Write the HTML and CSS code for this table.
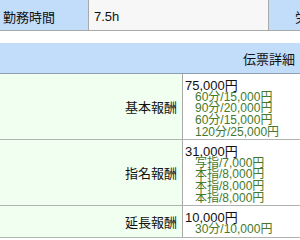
FILE: index.html
```html
<!DOCTYPE html>
<html lang="ja">
<head>
<meta charset="utf-8">
<link rel="stylesheet" href="styles.css">
</head>
<body>
<div class="top">
  <div class="tcell tlabel">勤務時間</div>
  <div class="tcell tvalue">7.5h</div>
  <div class="tcell tlabel tlabel-right">労働</div>
</div>
<div class="detail">
  <div class="head">伝票詳細</div>
  <div class="row">
    <div class="name">基本報酬</div>
    <div class="amt">
      <div class="main">75,000円</div>
      <div class="sub">60分/15,000円</div>
      <div class="sub">90分/20,000円</div>
      <div class="sub">60分/15,000円</div>
      <div class="sub">120分/25,000円</div>
    </div>
  </div>
  <div class="row">
    <div class="name">指名報酬</div>
    <div class="amt">
      <div class="main">31,000円</div>
      <div class="sub">写指/7,000円</div>
      <div class="sub">本指/8,000円</div>
      <div class="sub">本指/8,000円</div>
      <div class="sub">本指/8,000円</div>
    </div>
  </div>
  <div class="row">
    <div class="name">延長報酬</div>
    <div class="amt">
      <div class="main">10,000円</div>
      <div class="sub">30分/10,000円</div>
    </div>
  </div>
</div>
</body>
</html>
```

FILE: styles.css
```css
html, body {
  margin: 0;
  padding: 0;
  background: #ffffff;
  overflow: hidden;
}
body {
  width: 300px;
  font-family: "Liberation Sans", "Noto Sans CJK JP", sans-serif;
  font-size: 13px;
  color: #111111;
}
.top {
  display: grid;
  grid-template-columns: 89px 180px 80px;
  width: 349px;
  height: 30px;
  border-bottom: 1px solid #a9a9a9;
}
.tcell {
  display: flex;
  align-items: center;
  padding-top: 3px;
  white-space: nowrap;
  overflow: hidden;
}
.tlabel {
  background: #c1ddfa;
  padding-left: 3px;
  border-right: 1px solid #a9a9a9;
}
.tlabel-right {
  padding-left: 26px;
  border-right: none;
}
.tvalue {
  background: #f7f7f7;
  padding-left: 5px;
  border-right: 1px solid #a9a9a9;
}
.detail {
  margin-top: 12px;
}
.head {
  background: #c1ddfa;
  border-bottom: 1px solid #8e9fb1;
  display: flex;
  align-items: center;
  justify-content: flex-end;
  padding-right: 5px;
  padding-top: 1px;
  box-sizing: border-box;
  height: 31px;
}
.row {
  display: grid;
  grid-template-columns: 183px 1fr;
  border-bottom: 1px solid #b0b4b0;
}
.name {
  background: #f1fff1;
  border-right: 1px solid #a9a9a9;
  display: flex;
  align-items: center;
  justify-content: flex-end;
  padding-right: 5px;
}
.amt {
  background: #ffffff;
  padding: 6px 0 1px 2px;
}
.main {
  line-height: 11.5px;
  font-size: 13px;
}
.sub {
  font-size: 12px;
  line-height: 11.67px;
  color: #44792c;
  padding-left: 10px;
}
```
